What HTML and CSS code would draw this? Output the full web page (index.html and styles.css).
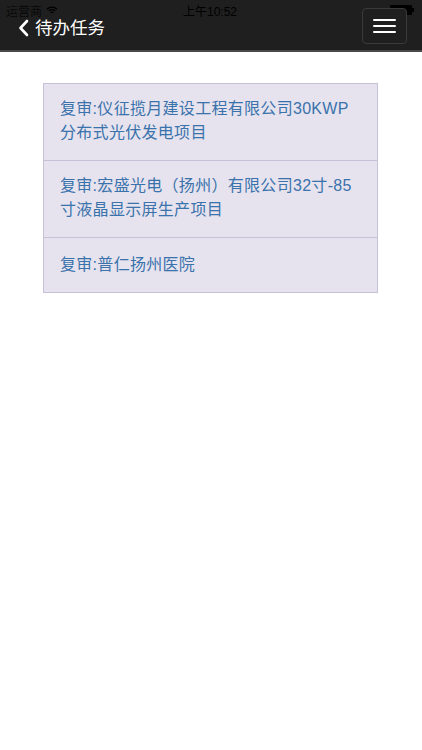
FILE: index.html
```html
<!DOCTYPE html>
<html lang="zh">
<head>
<meta charset="utf-8">
<link rel="stylesheet" href="styles.css">
</head>
<body>
<header class="topbar">
  <div class="status">
    <span class="carrier">运营商 <svg class="wifi" width="12" height="9" viewBox="0 0 12 9"><path d="M1 3.2a7 7 0 0 1 10 0M2.8 5a4.4 4.4 0 0 1 6.4 0M4.6 6.8a1.9 1.9 0 0 1 2.8 0" fill="none" stroke="#000" stroke-width="1.3"/></svg></span>
    <span class="time">上午10:52</span>
    <span class="battery"><span class="cell"></span><span class="tip"></span></span>
  </div>
  <div class="navrow">
    <div class="back">
      <svg class="chev" width="11" height="18" viewBox="0 0 11 18"><path d="M9 2 2.5 9 9 16" fill="none" stroke="#fff" stroke-width="2.6" stroke-linecap="round" stroke-linejoin="round"/></svg>
      <span class="title">待办任务</span>
    </div>
    <button class="menu" type="button"><span></span><span></span><span></span></button>
  </div>
</header>
<main class="content">
  <ul class="tasks">
    <li class="task">复审:仪征揽月建设工程有限公司30KWP分布式光伏发电项目</li>
    <li class="task">复审:宏盛光电（扬州）有限公司32寸-85寸液晶显示屏生产项目</li>
    <li class="task">复审:普仁扬州医院</li>
  </ul>
</main>
</body>
</html>
```
FILE: styles.css
```css
* { box-sizing: border-box; }
html, body { margin: 0; padding: 0; background: #fff; }
body { font-family: "Liberation Sans", "Noto Sans CJK SC", sans-serif; width: 422px; }

.topbar {
  background: #1f1f1f;
  height: 52px;
  border-bottom: 2px solid #4a4a4a;
  display: flex;
  flex-direction: column;
}
.status {
  height: 20px;
  display: flex;
  align-items: center;
  justify-content: space-between;
  padding: 0 8px 0 6px;
  font-size: 12px;
  color: #000;
}
.carrier { display: flex; align-items: center; gap: 4px; width: 80px; color: #080808; }
.time { color: #000; }
.battery { display: flex; align-items: center; width: 80px; justify-content: flex-end; }
.cell { width: 22px; height: 10px; background: #000; border-radius: 1px; }
.tip { width: 2px; height: 4px; background: #000; }

.navrow {
  flex: 1;
  display: flex;
  align-items: flex-start;
  justify-content: space-between;
  padding: 0 15px 0 18px;
}
.back { display: flex; align-items: center; gap: 6px; height: 18px; margin-top: -1px; }
.chev { display: block; }
.title { color: #fff; font-size: 17.5px; line-height: 18px; }

.menu {
  margin-top: -12px;
  width: 45px;
  height: 36px;
  border: 1px solid #3a3a3a;
  border-radius: 4px;
  background: #1f1f1f;
  display: flex;
  flex-direction: column;
  align-items: center;
  justify-content: center;
  gap: 4px;
  padding: 0;
}
.menu span { display: block; width: 23px; height: 2px; background: #fff; border-radius: 1px; }

.content { padding: 31px 44px 0 43px; }
.tasks {
  list-style: none;
  margin: 0;
  padding: 0;
  border: 1px solid #c6c1d6;
  background: #e6e3ee;
}
.task {
  padding: 13px 22px 15px 16px;
  font-size: 16px;
  line-height: 24px;
  letter-spacing: 0.3px;
  color: #3a72ac;
  border-top: 1px solid #c6c1d6;
  min-height: 54px;
}
.task:first-child { border-top: 0; }
.task:last-child { padding-top: 15px; }
```
